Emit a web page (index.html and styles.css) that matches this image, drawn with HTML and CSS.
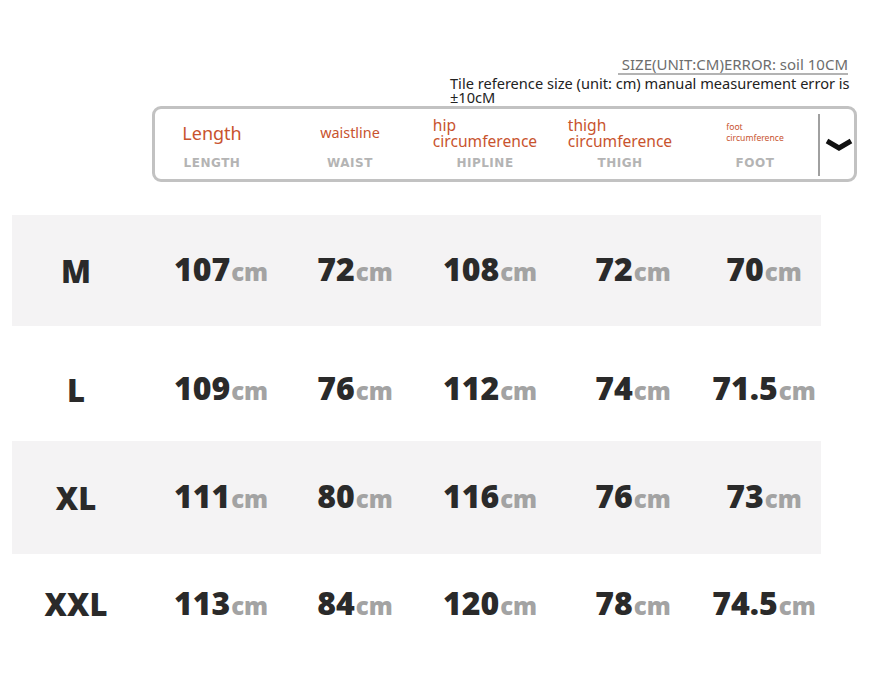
FILE: index.html
```html
<!DOCTYPE html>
<html>
<head>
<meta charset="utf-8">
<link rel="stylesheet" href="styles.css">
</head>
<body>
<div class="page">
  <div class="note">
    <div class="note-title"><span>SIZE(UNIT:CM)ERROR: soil 10CM</span></div>
    <div class="note-text">Tile reference size (unit: cm) manual measurement error is ±10cM</div>
  </div>

  <div class="head-box">
    <div class="head-cell c1"><div class="cn"><span class="cn-len">Length</span></div><div class="en">LENGTH</div></div>
    <div class="head-cell c2"><div class="cn"><span class="cn-waist">waistline</span></div><div class="en">WAIST</div></div>
    <div class="head-cell c3"><div class="cn"><span class="cn-two">hip<br>circumference</span></div><div class="en">HIPLINE</div></div>
    <div class="head-cell c4"><div class="cn"><span class="cn-two">thigh<br>circumference</span></div><div class="en">THIGH</div></div>
    <div class="head-cell c5"><div class="cn"><span class="cn-foot">foot<br>circumference</span></div><div class="en">FOOT</div></div>
    <div class="divider"></div>
    <div class="chev"><svg width="28" height="14" viewBox="0 0 28 14"><polyline points="2,3 14,10 26,3" fill="none" stroke="#111" stroke-width="5" stroke-linejoin="miter"/></svg></div>
  </div>

  <div class="table">
    <div class="row gray r-m">
      <div class="sz">M</div>
      <div class="v">107<span>cm</span></div>
      <div class="v">72<span>cm</span></div>
      <div class="v">108<span>cm</span></div>
      <div class="v">72<span>cm</span></div>
      <div class="v">70<span>cm</span></div>
    </div>
    <div class="row r-l">
      <div class="sz">L</div>
      <div class="v">109<span>cm</span></div>
      <div class="v">76<span>cm</span></div>
      <div class="v">112<span>cm</span></div>
      <div class="v">74<span>cm</span></div>
      <div class="v">71.5<span>cm</span></div>
    </div>
    <div class="row gray r-xl">
      <div class="sz">XL</div>
      <div class="v">111<span>cm</span></div>
      <div class="v">80<span>cm</span></div>
      <div class="v">116<span>cm</span></div>
      <div class="v">76<span>cm</span></div>
      <div class="v">73<span>cm</span></div>
    </div>
    <div class="row r-xxl">
      <div class="sz">XXL</div>
      <div class="v">113<span>cm</span></div>
      <div class="v">84<span>cm</span></div>
      <div class="v">120<span>cm</span></div>
      <div class="v">78<span>cm</span></div>
      <div class="v">74.5<span>cm</span></div>
    </div>
  </div>
</div>
</body>
</html>
```

FILE: styles.css
```css
html, body {
  margin: 0;
  padding: 0;
  background: #ffffff;
}
.page {
  width: 872px;
  height: 687px;
  padding-top: 53px;
  box-sizing: border-box;
  font-family: "Noto Sans", "Open Sans", sans-serif;
}
.note {
  margin-left: 450px;
  width: 402px;
}
.note-title {
  text-align: right;
  padding-right: 4px;
}
.note-title span {
  display: inline-block;
  font-size: 15px;
  line-height: 18px;
  color: #6d6d6d;
  padding-left: 4px;
  border-bottom: 2px solid #b3b3b3;
}
.note-text {
  font-size: 14.6px;
  line-height: 14px;
  color: #222;
  margin-top: 1px;
}
.head-box {
  margin-left: 152px;
  margin-top: 2px;
  width: 705px;
  height: 76px;
  box-sizing: border-box;
  border: 3px solid #c2c2c2;
  border-radius: 9px;
  display: grid;
  grid-template-columns: 114px 162px 108px 162px 108px 9px 2px 34px;
  align-items: stretch;
}
.head-cell {
  display: flex;
  flex-direction: column;
  align-items: center;
}
.cn {
  height: 42px;
  display: flex;
  flex-direction: column;
  justify-content: center;
  padding-top: 5px;
  box-sizing: border-box;
  color: #c8532e;
  white-space: nowrap;
}
.cn-len { font-size: 18px; line-height: 20px; }
.cn-waist { font-size: 14.4px; line-height: 16px; }
.cn-two { font-size: 15.6px; line-height: 16px; }
.cn-foot { font-size: 8.6px; line-height: 11px; }
.en {
  margin-top: 5px;
  font-family: "DejaVu Sans", sans-serif;
  font-weight: bold;
  font-size: 12px;
  line-height: 14px;
  letter-spacing: 0.5px;
  color: #b4b4b4;
}
.divider {
  grid-column: 7;
  background: #a0a0a0;
  width: 1.5px;
  margin: 5px 0 3px 0;
}
.chev {
  grid-column: 8;
  display: flex;
  align-items: center;
  padding-left: 5px;
  padding-top: 2px;
}
.table {
  margin-top: 33px;
  margin-left: 12px;
  width: 809px;
}
.row {
  display: grid;
  grid-template-columns: 128px 162px 106px 164px 122px 140px;
  align-items: center;
  justify-items: center;
  font-family: "Open Sans", "Noto Sans", sans-serif;
  font-weight: 800;
  color: #2a2a2a;
}
.row.gray { background: #f4f3f4; }
.r-m { height: 111px; }
.r-l { height: 115px; padding-top: 12px; box-sizing: border-box; }
.r-xl { height: 113px; }
.r-xxl { height: 100px; }
.sz {
  font-size: 31px;
  line-height: 36px;
}
.v {
  font-size: 32px;
  line-height: 36px;
  white-space: nowrap;
}
.v span {
  font-size: 24px;
  color: #a3a3a3;
  margin-left: 1px;
}
```
